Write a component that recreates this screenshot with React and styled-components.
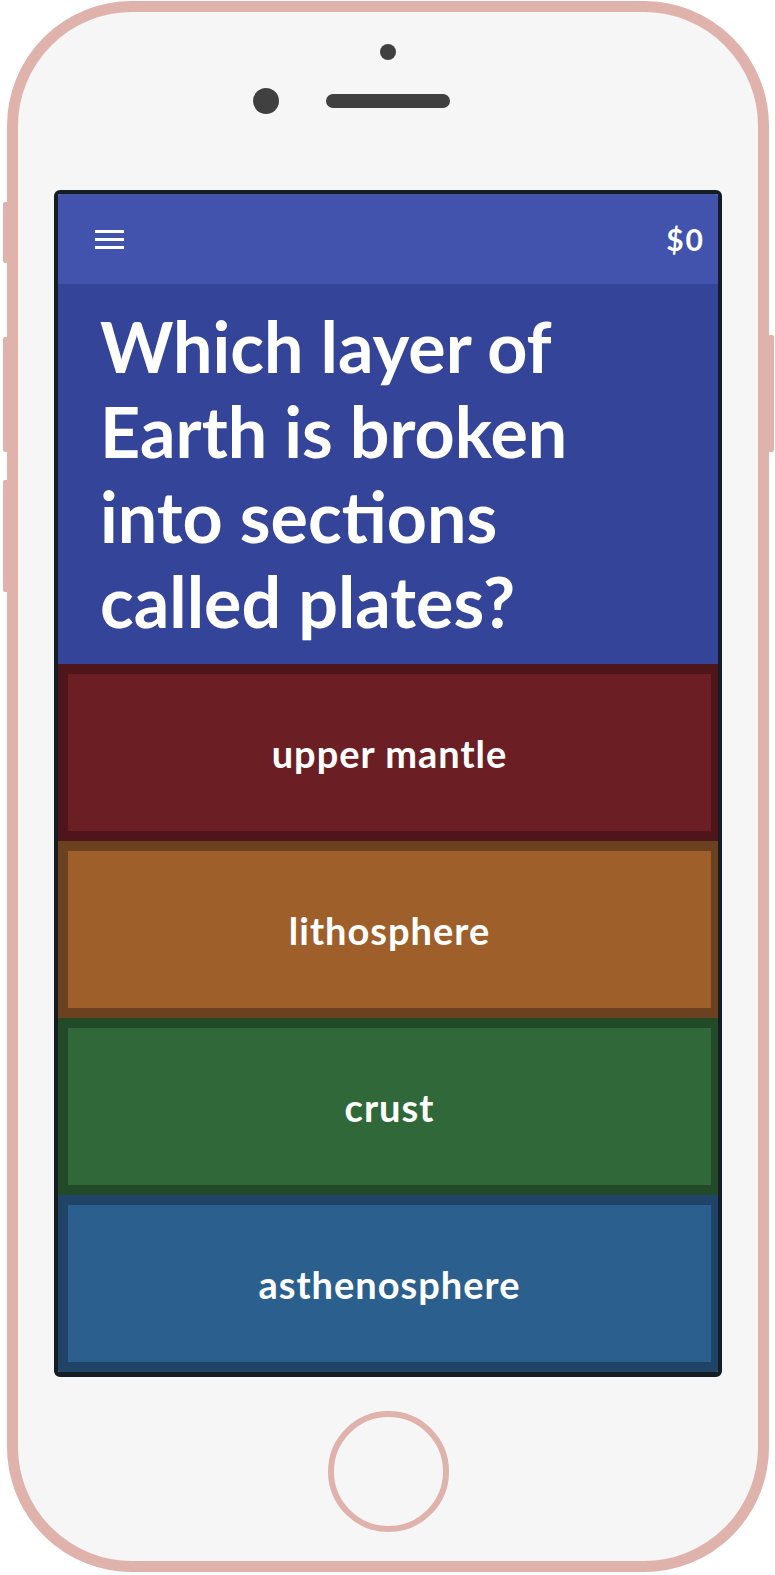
import React from 'react';
import styled, { createGlobalStyle } from 'styled-components';

const GlobalStyle = createGlobalStyle`
  body {
    margin: 0;
    background: #ffffff;
    font-family: Lato, "Liberation Sans", sans-serif;
  }
`;

const answers = [
  { label: 'upper mantle', edge: '#4e151b', fill: '#6b1f25' },
  { label: 'lithosphere', edge: '#6b4120', fill: '#9e5f2a' },
  { label: 'crust', edge: '#234a28', fill: '#30683a' },
  { label: 'asthenosphere', edge: '#1f4468', fill: '#2a5f8e' },
];

const App = () => {
  return (
    <>
      <GlobalStyle />
      <Phone>
        <SideButton side="left" top={190} length={61} />
        <SideButton side="left" top={325} length={115} />
        <SideButton side="left" top={468} length={112} />
        <SideButton side="right" top={323} length={117} />

        <Bezel>
          <Sensor />
          <EarRow>
            <Camera />
            <Speaker />
            <span />
          </EarRow>
        </Bezel>

        <Screen>
          <TopBar>
            <Burger>
              <i />
              <i />
              <i />
            </Burger>
            <Money>$0</Money>
          </TopBar>
          <Question>
            Which layer of<br />
            Earth is broken<br />
            into sections<br />
            called plates?
          </Question>
          {answers.map((a) => (
            <Answer key={a.label} edge={a.edge}>
              <AnswerFace fill={a.fill}>{a.label}</AnswerFace>
            </Answer>
          ))}
        </Screen>

        <HomeButton />
      </Phone>
    </>
  );
};

const Phone = styled.div`
  position: relative;
  box-sizing: border-box;
  width: 762px;
  height: 1571px;
  margin: 1px 0 0 7px;
  border: 11px solid #dfb2ac;
  border-radius: 125px;
  background: #f6f6f6;
  display: flex;
  flex-direction: column;
  align-items: center;
`;

const SideButton = styled.div`
  position: absolute;
  top: ${(p) => p.top}px;
  height: ${(p) => p.length}px;
  width: 6px;
  background: #dfb2ac;
  border-radius: 2px;
  ${(p) => (p.side === 'left' ? 'left: -15px;' : 'right: -16px;')}
`;

const Bezel = styled.div`
  width: 100%;
  display: flex;
  flex-direction: column;
  align-items: center;
  padding-top: 32px;
`;

const Sensor = styled.div`
  width: 16px;
  height: 16px;
  border-radius: 50%;
  background: #404040;
`;

const EarRow = styled.div`
  width: 100%;
  margin-top: 28px;
  display: grid;
  grid-template-columns: 1fr auto 1fr;
  align-items: center;
`;

const Camera = styled.div`
  justify-self: end;
  margin-right: 47px;
  width: 26px;
  height: 26px;
  border-radius: 50%;
  background: #404040;
`;

const Speaker = styled.div`
  width: 124px;
  height: 14px;
  border-radius: 7px;
  background: #404040;
`;

const Screen = styled.div`
  box-sizing: border-box;
  width: 668px;
  height: 1187px;
  margin-top: 76px;
  border: 4px solid #151d22;
  border-bottom-width: 5px;
  border-radius: 6px;
  overflow: hidden;
  display: flex;
  flex-direction: column;
`;

const TopBar = styled.div`
  height: 90px;
  flex-shrink: 0;
  background: #4253ae;
  display: flex;
  align-items: center;
  justify-content: space-between;
  padding: 0 15px 0 37px;
`;

const Burger = styled.div`
  width: 29px;
  display: flex;
  flex-direction: column;
  gap: 5px;

  i {
    display: block;
    height: 3px;
    background: #ffffff;
  }
`;

const Money = styled.span`
  color: #ffffff;
  font-weight: 700;
  font-size: 30px;
  letter-spacing: 2px;
  line-height: 1;
  margin-right: -2px;
`;

const Question = styled.h1`
  margin: 0;
  flex-shrink: 0;
  background: #334499;
  color: #ffffff;
  font-weight: 700;
  font-size: 70px;
  line-height: 85px;
  padding: 20px 42px 20px 42px;
`;

const Answer = styled.div`
  flex: 1;
  display: flex;
  background: ${(p) => p.edge};
  padding: 10px 7px 10px 10px;
`;

const AnswerFace = styled.div`
  flex: 1;
  display: flex;
  align-items: center;
  justify-content: center;
  background: ${(p) => p.fill};
  color: #ffffff;
  font-weight: 700;
  font-size: 38px;
  letter-spacing: 1px;
`;

const HomeButton = styled.div`
  box-sizing: border-box;
  margin-top: 34px;
  width: 121px;
  height: 121px;
  border-radius: 50%;
  border: 6px solid #dfb2ac;
`;

export default App;
